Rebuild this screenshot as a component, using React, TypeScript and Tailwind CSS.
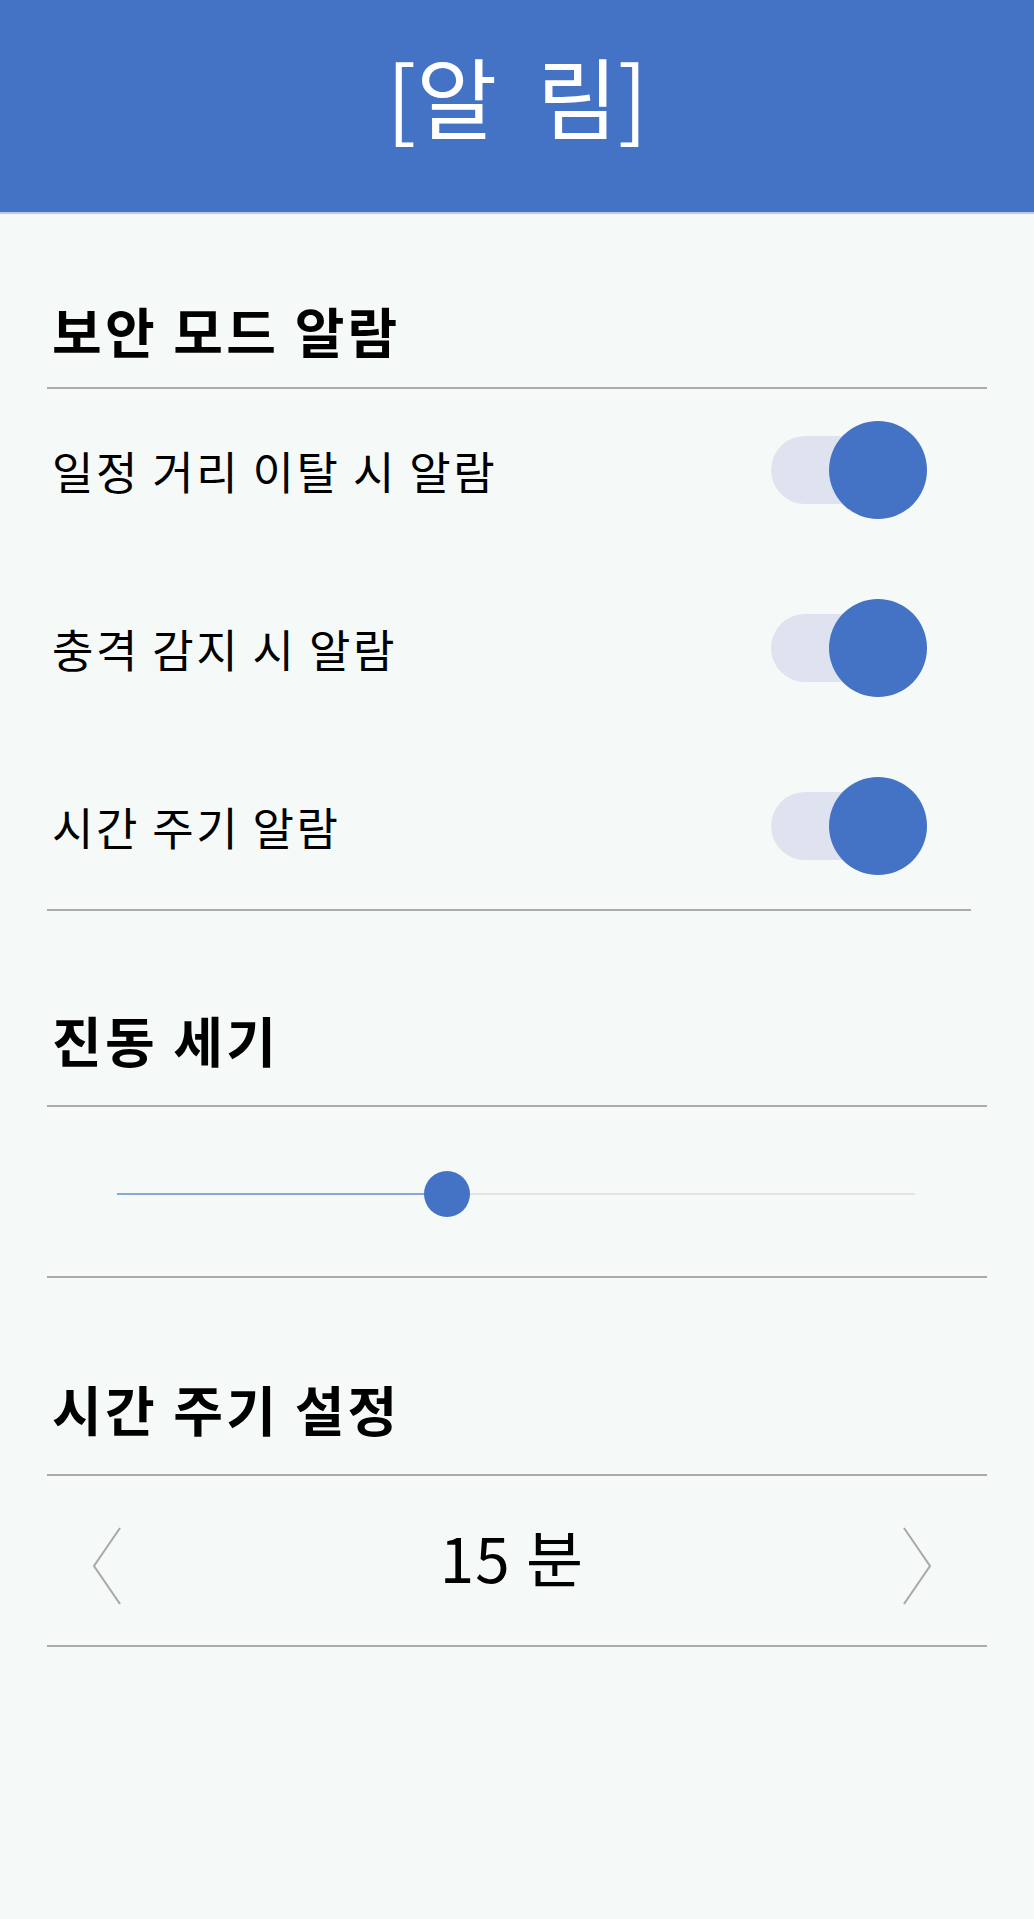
import React, { useState } from 'react';

const FONT = "font-['Noto_Sans_CJK_KR','Noto_Sans',sans-serif]";

const Toggle: React.FC<{ on: boolean; onChange: () => void }> = ({ on, onChange }) => (
  <button onClick={onChange} className="relative w-[156px] h-[98px] shrink-0">
    <span className="absolute left-0 top-[15px] h-[68px] w-[140px] rounded-full bg-[#dfe3ef]" />
    <span
      className={`absolute top-0 h-[98px] w-[98px] rounded-full ${on ? 'right-0 bg-[#4472c4]' : 'left-0 bg-[#bdbdbd]'}`}
    />
  </button>
);

const Chevron: React.FC<{ dir: 'left' | 'right' }> = ({ dir }) => (
  <svg width="30" height="78" viewBox="0 0 30 78" className="shrink-0">
    <polyline
      points={dir === 'left' ? '28,1 2,39 28,77' : '2,1 28,39 2,77'}
      fill="none"
      stroke="#a8a8a8"
      strokeWidth="2"
    />
  </svg>
);

export default function App() {
  const [alarms, setAlarms] = useState([true, true, true]);
  const [level] = useState(41.3);
  const [minutes, setMinutes] = useState(15);

  const labels = ['일정 거리 이탈 시 알람', '충격 감지 시 알람', '시간 주기 알람'];

  return (
    <div className={`min-h-[1919px] bg-[#f5f9f8] text-black ${FONT}`}>
      {/* header */}
      <div className="h-[214px] bg-[#4472c4] border-b-2 border-[#b9c9e6] flex justify-center">
        <h1 className="pt-[50px] text-[88px] leading-none font-normal text-white">[알&nbsp;&nbsp;림]</h1>
      </div>

      <div className="px-[47px]">
        {/* 보안 모드 알람 */}
        <div className="pt-[90px] pb-[29px] pl-[5px] border-b-2 border-[#ababab]">
          <h2 className="text-[54px] leading-none font-bold tracking-[0.06em]">보안 모드 알람</h2>
        </div>
        <div className="flex flex-col gap-[78px] pt-[31px] pb-[33px]">
          {labels.map((label, i) => (
            <div key={label} className="h-[100px] flex items-center justify-between pl-[5px] pr-[60px]">
              <span className="text-[45px] leading-none tracking-[0.055em]">{label}</span>
              <Toggle
                on={alarms[i]}
                onChange={() => setAlarms(a => a.map((v, j) => (j === i ? !v : v)))}
              />
            </div>
          ))}
        </div>
        <div className="mr-[16px] border-b-2 border-[#ababab]" />

        {/* 진동 세기 */}
        <div className="pt-[102px] pb-[38px] pl-[5px] border-b-2 border-[#ababab]">
          <h2 className="text-[54px] leading-none font-bold tracking-[0.06em]">진동 세기</h2>
        </div>
        <div className="h-[171px] flex items-center pl-[70px] pr-[72px] pt-[4px] border-b-2 border-[#ababab]">
          <div className="relative w-full h-[2px] bg-[#e3e3e3]">
            <div className="absolute left-0 top-0 h-[2px] bg-[#8aa6da]" style={{ width: `${level}%` }} />
            <div
              className="absolute top-[-22px] w-[46px] h-[46px] -ml-[23px] rounded-full bg-[#4472c4]"
              style={{ left: `${level}%` }}
            />
          </div>
        </div>

        {/* 시간 주기 설정 */}
        <div className="pt-[104px] pb-[38px] pl-[5px] border-b-2 border-[#ababab]">
          <h2 className="text-[54px] leading-none font-bold tracking-[0.06em]">시간 주기 설정</h2>
        </div>
        <div className="h-[171px] flex items-center pl-[45px] pr-[55px] pt-[10px] border-b-2 border-[#ababab]">
          <button onClick={() => setMinutes(m => Math.max(5, m - 5))}>
            <Chevron dir="left" />
          </button>
          <div className="flex-1 text-center text-[62px] leading-none tracking-[0.02em] pb-[20px]">{minutes} 분</div>
          <button onClick={() => setMinutes(m => m + 5)}>
            <Chevron dir="right" />
          </button>
        </div>
      </div>
    </div>
  );
}
